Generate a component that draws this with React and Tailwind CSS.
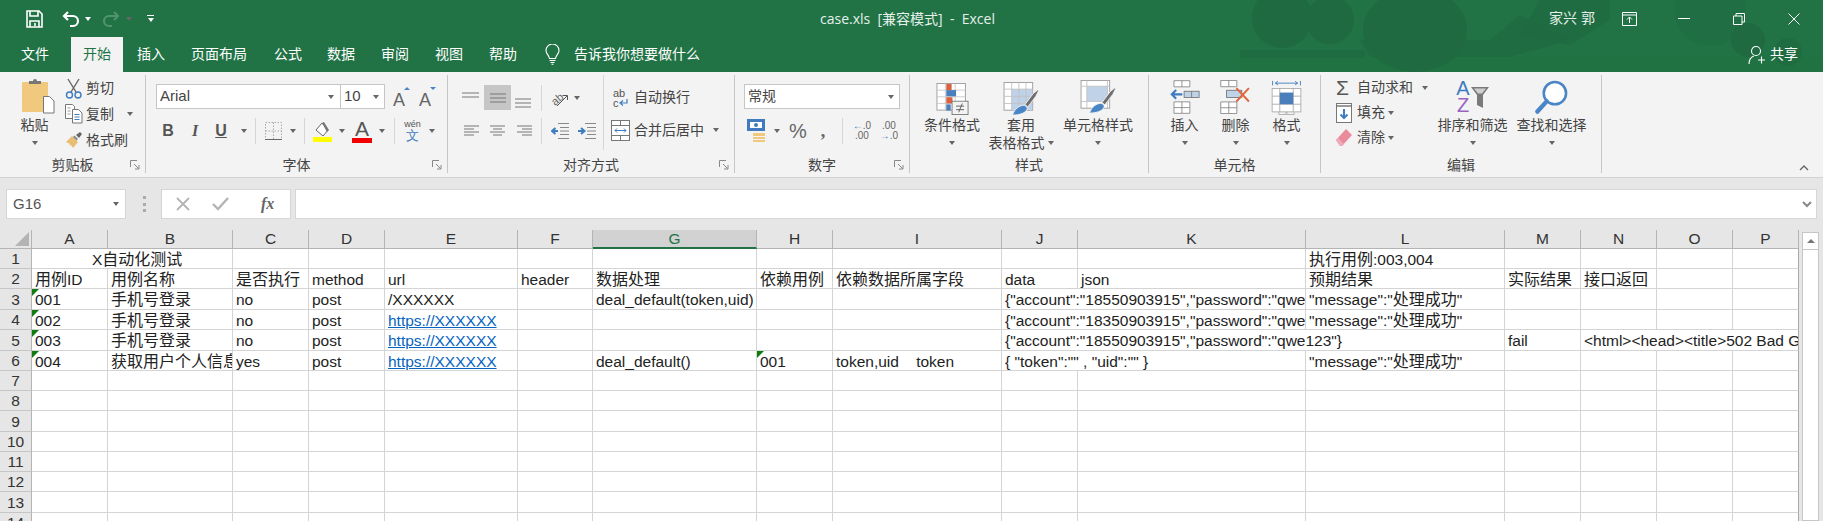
import React from 'react';

const CJK = /([\u4e00-\u9fff]+)/;

// Excel draws the CJK runs slightly larger than the Arial runs
function Mixed({ text }) {
  return text.split(CJK).map((part, i) =>
    i % 2 ? <span key={i} className="text-[16px]">{part}</span> : part
  );
}

function Caret({ className = '' }) {
  return <span className={`inline-block w-0 h-0 shrink-0 border-x-[3.5px] border-t-[4px] border-x-transparent border-t-[#666] ${className}`} />;
}

function VSep({ className = '' }) {
  return <span className={`w-px h-[26px] shrink-0 bg-[#d6d6d6] ${className}`} />;
}

/* ---------- title bar icons ---------- */
const SaveIcon = () => (
  <svg width="17" height="18" viewBox="0 0 17 18" fill="none" stroke="#fff" strokeWidth="1.6">
    <path d="M1 1h12l3 3v13H1z" />
    <path d="M4 1v5h8V1M4 17v-6h9v6" />
    <path d="M9 13v3" />
  </svg>
);
const UndoIcon = ({ color }) => (
  <svg width="18" height="18" viewBox="0 0 18 18" fill="none" stroke={color} strokeWidth="2.2">
    <path d="M6 2L2 6l4 4" />
    <path d="M2.5 6H11a4.5 4.5 0 010 10H8" />
  </svg>
);
const RedoIcon = ({ color }) => (
  <svg width="18" height="18" viewBox="0 0 18 18" fill="none" stroke={color} strokeWidth="2.2">
    <path d="M12 2l4 4-4 4" />
    <path d="M15.5 6H7a4.5 4.5 0 000 10h3" />
  </svg>
);
const Bulb = () => (
  <svg width="15" height="21" viewBox="0 0 15 21" fill="none" stroke="#fff" strokeWidth="1.1">
    <path d="M4.5 14.5C4 11 1 10 1 6.5a6.5 6.5 0 0113 0c0 3.500-3 4.500-3.500 8z" />
    <path d="M4.500 16.500h6M5.500 18.500h4M6.500 20.200h2" />
  </svg>
);

/* ---------- clipboard ---------- */
const PasteIcon = () => (
  <svg width="33" height="36" viewBox="0 0 33 36">
    <rect x="0" y="4" width="26" height="30" rx="1" fill="#f0c97f" />
    <path d="M7 5V3h4a2 2 0 014 0h4v3H7z" fill="#777" />
    <path d="M21.500 18.500h6l4.500 4.500v12h-10.500z" fill="#fff" stroke="#777" />
  </svg>
);
const CutIcon = () => (
  <svg width="18" height="21" viewBox="0 0 18 21" fill="none">
    <path d="M3 1l8 13M14 1L6 14" stroke="#666" strokeWidth="1.4" />
    <circle cx="4.500" cy="17" r="3" stroke="#3f7cbf" strokeWidth="1.4" />
    <circle cx="13" cy="17" r="3" stroke="#3f7cbf" strokeWidth="1.4" />
  </svg>
);
const CopyIcon = () => (
  <svg width="18" height="20" viewBox="0 0 18 20" fill="#fff" stroke="#777">
    <path d="M.5.500h7l2 2v12h-9z" />
    <path d="M7.500 5.500h6l3.500 3.500v10H7.500z" />
    <path d="M9.500 10.500h5M9.500 13h5M9.500 15.500h5" stroke="#3f7cbf" />
    <path d="M2.500 4h3M2.500 7h3M2.500 10h3" stroke="#999" />
  </svg>
);
const BrushIcon = () => (
  <svg width="18" height="18" viewBox="0 0 18 18">
    <path d="M1 11l6-6 6 6-5 6-2-3-2 1 1-2z" fill="#e9bd73" />
    <path d="M8 6l1.500-1.500 3.500 3.500L11.500 9.500z" fill="#888" />
    <path d="M11 4l4-3 2 2-3 4z" fill="#666" />
  </svg>
);

/* ---------- font ---------- */
const FontBigger = ({ up }) => (
  <svg width="18" height="22" viewBox="0 0 18 22">
    <text x="0" y="20" fontFamily="Liberation Sans" fontSize="18" fill="#666">A</text>
    <path d={up ? 'M11 4l3-3 3 3z' : 'M11 1l3 3 3-3z'} fill="#4a86c5" />
  </svg>
);
const BorderIcon = () => (
  <svg width="17" height="18" viewBox="0 0 17 18" fill="none" stroke="#aaa" strokeDasharray="1.500 1.500">
    <path d="M.5.500h16v17H.500zM8.500.500v17M.500 9h16" />
    <path d="M0 17.500h17" stroke="#666" strokeDasharray="none" />
  </svg>
);
const FillIcon = () => (
  <svg width="20" height="21" viewBox="0 0 20 21">
    <path d="M3 9l6-7 6 7-5 6z" fill="#fff" stroke="#666" />
    <path d="M9 2l2-1 5 8-2 2z" fill="#777" />
    <rect x="0" y="16" width="19" height="5" fill="#ffff00" />
  </svg>
);
const FontColor = () => (
  <span className="flex flex-col items-center w-[20px]">
    <span className="text-[21px] leading-[19px] text-[#555] font-['Liberation_Sans']">A</span>
    <span className="w-[20px] h-[5px] bg-[#f00000]" />
  </span>
);
const Wen = () => (
  <span className="flex flex-col items-center w-[17px] text-[#555]">
    <span className="text-[9px] leading-[9px] font-['Liberation_Sans']">wén</span>
    <span className="text-[13px] leading-[13px] text-[#3f7cbf]">文</span>
  </span>
);

/* ---------- alignment ---------- */
const Lines = ({ rows, color = '#777', w = 20, h = 14 }) => (
  <svg width={w} height={h} viewBox={`0 0 ${w} ${h}`} stroke={color} strokeWidth="1">
    {rows.map(([a, b, y], i) => <line key={i} x1={a} x2={b} y1={y} y2={y} />)}
  </svg>
);
const OrientIcon = () => (
  <svg width="18" height="18" viewBox="0 0 18 18" fill="none" stroke="#666">
    <text x="0" y="14" fontFamily="Liberation Sans" fontSize="11" transform="rotate(-40 6 10)" fill="#666" stroke="none">ab</text>
    <path d="M6 17L16 7M11.500 6.500H16.500V11" stroke="#555" />
  </svg>
);
const Indent = ({ flip }) => (
  <svg width="18" height="16" viewBox="0 0 18 16">
    <path d="M7 .500h11M9 4.500h9M9 8h9M9 11.500h9M7 15.500h11" stroke="#888" />
    <path d={flip ? 'M0 8h5M3 5l3.500 3L3 11' : 'M7 8H2M4.500 5L1 8l3.500 3'} stroke="#3f7cbf" strokeWidth="2" fill="none" />
  </svg>
);
const WrapIcon = () => (
  <span className="relative w-[16px] h-[20px] text-[11px] leading-[10px] text-[#555] font-['Liberation_Sans'] flex flex-col">
    <span>ab</span>
    <span className="flex items-center">c
      <svg width="9" height="8" viewBox="0 0 9 8" fill="none" stroke="#3f7cbf" strokeWidth="1.200"><path d="M8 0v4H2M4 1.500L1 4l3 2.500" /></svg>
    </span>
  </span>
);
const MergeIcon = () => (
  <svg width="19" height="21" viewBox="0 0 19 21" fill="#fff" stroke="#777">
    <rect x=".5" y=".5" width="18" height="20" />
    <path d="M.5 5.500h18M.500 15.500h18M9.500.500v5M9.500 15.500v5" />
    <path d="M4 10.500h11M6 8.500l-2 2 2 2M13 8.500l2 2-2 2" stroke="#3f7cbf" fill="none" />
  </svg>
);

/* ---------- number ---------- */
const CurrencyIcon = () => (
  <svg width="20" height="24" viewBox="0 0 20 24">
    <rect x="0" y="0" width="18" height="12" fill="#3f7cbf" />
    <rect x="3" y="3" width="12" height="6" fill="#fff" />
    <circle cx="9" cy="6" r="2" fill="#3f7cbf" />
    <path d="M6 14h12v3H6zM6 18h12v2H6zM6 21h12v2H6z" fill="#f0c97f" />
  </svg>
);
const DecimalIcon = ({ more }) => (
  <span className="flex flex-col w-[16px] text-[10px] leading-[10px] text-[#666] font-['Liberation_Sans'] text-right">
    <span className="whitespace-nowrap">{more ? <><b className="text-[#3f7cbf]">←</b>.0</> : '.00'}</span>
    <span className="whitespace-nowrap">{more ? '.00' : <><b className="text-[#3f7cbf]">→</b>.0</>}</span>
  </span>
);

/* ---------- styles ---------- */
const CondIcon = () => (
  <svg className="mt-[3px]" width="35" height="32" viewBox="0 0 36 36">
    <rect x=".5" y=".5" width="32" height="30" fill="#fff" stroke="#999" />
    <path d="M10 .5v30M21 .5v30M.5 8h32M.5 15.500h32M.5 23h32" stroke="#c8c8c8" />
    <rect x="11" y="1" width="6" height="7" fill="#d8633e" />
    <rect x="11" y="8" width="11" height="7" fill="#4a7fbc" />
    <rect x="11" y="16" width="7" height="7" fill="#d8633e" />
    <rect x="11" y="24" width="5" height="7" fill="#4a7fbc" />
    <rect x="17.500" y="20.500" width="18" height="15" fill="#f3f3f3" stroke="#777" />
    <path d="M22 26h9M22 30h9M29 23l-4 10" stroke="#555" fill="none" />
  </svg>
);
const SwatchBrush = ({ variant }) => (
  <svg className={variant === 'table' ? 'mt-[2px]' : ''} width="37" height="34" viewBox="0 0 40 38">
    <rect x=".5" y=".5" width="32" height="31" fill="#fff" stroke="#999" />
    {variant === 'table' ? (
      <>
        <rect x="9" y="8" width="23" height="23" fill="#bfd2e8" />
        <path d="M9 .5v31M17 .5v31M25 .5v31M.5 8h32M.5 16h32M.5 24h32" stroke="#c2c2c2" />
      </>
    ) : (
      <>
        <rect x="7" y="7" width="23" height="17" fill="#bfd2e8" />
        <path d="M7 .5v31M30 .5v31M.5 7h32M.5 24h32" stroke="#c2c2c2" />
      </>
    )}
    <path d="M24 25l9-12 5-4 1 1-3 6-9 12z" fill="#6f6f6f" stroke="#f3f3f3" />
    <path d="M10 37c2-7 8-11 13-11 3 1 4 3 3 5-2 4-9 6-16 6z" fill="#4a86c5" stroke="#f3f3f3" />
  </svg>
);

/* ---------- cells ---------- */
const InsertCell = () => (
  <svg width="30" height="34" viewBox="0 0 34 38" fill="#fff" stroke="#888">
    <path d="M4.500.500h18v7h-18zM13.500.500v7M4.500 24.500h18v13h-18zM13.500 24.500v13M4.500 31h18" />
    <rect x="16" y="12.500" width="17" height="7" fill="#bfd2e8" stroke="#777" />
    <path d="M24.500 12.500v7" stroke="#777" />
    <path d="M14 16H2M7 11l-5 5 5 5" stroke="#3f7cbf" strokeWidth="2.400" fill="none" />
  </svg>
);
const DeleteCell = () => (
  <svg width="33" height="34" viewBox="0 0 34 38" fill="#fff" stroke="#888">
    <path d="M.5.500h18v7H.500zM9.500.500v7M.500 24.500h18v13H.500zM9.500 24.500v13M.500 31h18" />
    <rect x="7" y="11.500" width="17" height="8" fill="#bfd2e8" stroke="#777" />
    <path d="M18 9l14 15M32 9L18 24" stroke="#e0663f" strokeWidth="2.200" fill="none" />
  </svg>
);
const FormatCell = () => (
  <svg width="33" height="35" viewBox="0 0 33 39" fill="none" stroke="#aaa">
    <path d="M1 1v5M32 1v5" stroke="#3f7cbf" />
    <path d="M4 3.500h25M7 1.500l-3 2 3 2M26 1.500l3 2-3 2" stroke="#3f7cbf" />
    <rect x=".5" y="9.500" width="32" height="26" fill="#fff" />
    <path d="M9 9.500v26M24 9.500v26M.5 18h32M.5 27h32" />
    <rect x="9" y="14" width="15" height="13" fill="#4a7fbc" stroke="none" />
    <path d="M8 35.500v3h8v-3M17 35.500v3h8v-3" />
  </svg>
);

/* ---------- editing ---------- */
const FillDown = () => (
  <svg width="16" height="20" viewBox="0 0 16 20" fill="#fff" stroke="#777">
    <rect x=".5" y=".5" width="15" height="19" />
    <path d="M.5 3h15" strokeWidth="1.500" />
    <path d="M8 6v9M4.500 11.500L8 15l3.500-3.500" stroke="#3f7cbf" strokeWidth="2" fill="none" />
  </svg>
);
const Eraser = () => (
  <svg width="16" height="17" viewBox="0 0 16 17">
    <path d="M0 11L10 0l6 6L6 17H4z" fill="#ea8a9c" />
    <path d="M0 11l2-2 6 6-2 2H4z" fill="#f0a9b6" />
  </svg>
);
const SortIcon = () => (
  <span className="flex items-start h-[36px] font-['Liberation_Sans'] text-[20px] leading-[17px]">
    <span className="flex flex-col items-center">
      <span className="text-[#3f7cbf]">A</span>
      <span className="text-[#9a63c2]">Z</span>
    </span>
    <svg className="mt-[7px] ml-[1px]" width="18" height="21" viewBox="0 0 18 21">
      <path d="M0 0h18l-6 8v13l-6-3V8z" fill="#7a7a7a" />
      <path d="M3 1.500h12l-4 5H7z" fill="#cfcfcf" />
    </svg>
  </span>
);
const SearchIcon = () => (
  <svg width="33" height="35" viewBox="0 0 34 36" fill="none">
    <circle cx="20.500" cy="13.500" r="11.500" fill="#fff" stroke="#4a86c5" strokeWidth="2.600" />
    <path d="M12 22L2.500 32.500" stroke="#4a86c5" strokeWidth="4.500" strokeLinecap="round" />
  </svg>
);

const Launcher = () => (
  <svg className="absolute right-[5px] top-[3px]" width="10" height="10" viewBox="0 0 10 10" fill="none" stroke="#888">
    <path d="M.5 7V.5H7M4 4l4.500 4.500M5 9h4V5" />
  </svg>
);

/* ---------- ribbon pieces ---------- */
function Group({ width, label, launcher, children }) {
  return (
    <div className={`${width} shrink-0 flex flex-col mt-[3px] h-[98px] border-r border-[#c6c6c6]`}>
      <div className="h-[82px] flex">{children}</div>
      <div className="relative h-[16px] leading-[16px] text-center text-[14px] text-[#444]">
        {label}
        {launcher && <Launcher />}
      </div>
    </div>
  );
}

function BigBtn({ width, icon, lines, noCaret }) {
  return (
    <div className={`${width} shrink-0 flex flex-col items-center pt-[5px]`}>
      <div className="h-[36px] flex items-start justify-center">{icon}</div>
      {lines.map((line, i) => (
        <div key={i} className="h-[18px] leading-[18px] text-[14px] text-[#444] whitespace-nowrap flex items-center gap-[3px]">
          {line}
          {i === 1 && <Caret />}
        </div>
      ))}
      {lines.length === 1 && !noCaret && <div className="h-[18px] flex items-center"><Caret /></div>}
    </div>
  );
}

function SmallBtn({ icon, label, caret, height = 'h-[26px]' }) {
  return (
    <div className={`${height} flex items-center text-[14px] text-[#444] whitespace-nowrap`}>
      <span className="w-[21px] shrink-0 flex justify-start">{icon}</span>
      {label}
      {caret}
    </div>
  );
}

function Ribbon() {
  return (
    <div className="h-[106px] flex bg-[#f3f3f3] border-b border-[#d2d2d2]">
      <Group width="w-[146px]" label="剪贴板" launcher>
        <div className="ml-[14px] w-[41px] flex flex-col items-center pt-[3px] text-[14px] text-[#444]">
          <span className="ml-[8px] h-[36px]"><PasteIcon /></span>
          <span className="leading-[20px] mt-[1px] whitespace-nowrap">粘贴</span>
          <Caret className="mt-[6px]" />
        </div>
        <div className="ml-[10px] flex flex-col">
          <SmallBtn icon={<CutIcon />} label="剪切" />
          <SmallBtn icon={<CopyIcon />} label="复制" caret={<Caret className="ml-[13px]" />} />
          <SmallBtn icon={<BrushIcon />} label="格式刷" />
        </div>
      </Group>

      <Group width="w-[302px]" label="字体" launcher>
        <div className="flex flex-col pl-[10px] pt-[9px]">
          <div className="flex items-center">
            <div className="w-[185px] h-[25px] bg-white border border-[#c6c6c6] flex items-center justify-between pl-[3px] pr-[6px] text-[15px] text-[#444] font-['Liberation_Sans']">
              Arial<Caret />
            </div>
            <div className="w-[44px] h-[25px] bg-white border border-l-0 border-[#c6c6c6] flex items-center justify-between pl-[3px] pr-[5px] text-[15px] text-[#444] font-['Liberation_Sans']">
              10<Caret />
            </div>
            <span className="ml-[8px]"><FontBigger up /></span>
            <span className="ml-[8px]"><FontBigger /></span>
          </div>
          <div className="mt-[9px] h-[26px] flex items-center text-[#555] font-['Liberation_Serif'] text-[16px]">
            <b className="w-[24px] text-center font-['Liberation_Sans']">B</b>
            <i className="w-[30px] text-center font-bold">I</i>
            <u className="w-[22px] text-center font-bold font-['Liberation_Sans']">U</u>
            <Caret className="ml-[9px]" />
            <VSep className="ml-[8px]" />
            <span className="ml-[9px]"><BorderIcon /></span>
            <Caret className="ml-[8px]" />
            <VSep className="ml-[8px]" />
            <span className="ml-[8px]"><FillIcon /></span>
            <Caret className="ml-[6px]" />
            <span className="ml-[7px]"><FontColor /></span>
            <Caret className="ml-[7px]" />
            <VSep className="ml-[9px]" />
            <span className="ml-[9px]"><Wen /></span>
            <Caret className="ml-[8px]" />
          </div>
        </div>
      </Group>

      <Group width="w-[287px]" label="对齐方式" launcher>
        <div className="w-[155px] flex flex-col pl-[13px] pt-[10px]">
          <div className="h-[25px] flex items-center">
            <span className="w-[23px] self-start pt-[7px]"><Lines rows={[[1, 18, 1], [1, 18, 5]]} h={6} /></span>
            <span className="w-[27px] h-[25px] bg-[#c6c6c6] flex items-center justify-center"><Lines rows={[[2, 18, 1], [2, 18, 5], [2, 18, 9]]} h={10} /></span>
            <span className="w-[23px] self-end pl-[4px] pb-[2px]"><Lines rows={[[0, 16, 1], [0, 16, 5], [0, 16, 9]]} h={10} /></span>
            <VSep className="ml-[7px]" />
            <span className="ml-[9px]"><OrientIcon /></span>
            <Caret className="ml-[5px]" />
          </div>
          <div className="mt-[9px] h-[24px] flex items-center">
            <span className="w-[26px] pl-[3px]"><Lines rows={[[0, 15, 2], [0, 10, 5], [0, 15, 8], [0, 10, 11]]} /></span>
            <span className="w-[27px] pl-[3px]"><Lines rows={[[0, 15, 2], [3, 12, 5], [0, 15, 8], [3, 12, 11]]} /></span>
            <span className="w-[20px] pl-[3px]"><Lines rows={[[0, 15, 2], [5, 15, 5], [0, 15, 8], [5, 15, 11]]} /></span>
            <VSep className="ml-[7px]" />
            <span className="ml-[9px]"><Indent /></span>
            <span className="ml-[9px]"><Indent flip /></span>
          </div>
        </div>
        <div className="h-[75px] border-l border-[#d6d6d6] pl-[7px] flex flex-col text-[14px] text-[#444] whitespace-nowrap">
          <div className="h-[44px] flex items-center pl-[2px] pt-[1px]"><WrapIcon /><span className="ml-[5px]">自动换行</span></div>
          <div className="h-[22px] flex items-center"><MergeIcon /><span className="ml-[4px]">合并后居中</span><Caret className="ml-[9px]" /></div>
        </div>
      </Group>

      <Group width="w-[175px]" label="数字" launcher>
        <div className="flex flex-col pl-[9px] pt-[9px]">
          <div className="w-[156px] h-[25px] bg-white border border-[#c6c6c6] flex items-center justify-between pl-[3px] pr-[5px] text-[14px] text-[#444]">
            常规<Caret />
          </div>
          <div className="mt-[9px] h-[26px] flex items-center text-[#666]">
            <span className="ml-[3px]"><CurrencyIcon /></span>
            <Caret className="ml-[7px]" />
            <span className="ml-[9px] text-[20px] font-['Liberation_Sans']">%</span>
            <span className="ml-[14px] w-[8px] text-[18px] font-bold font-['Liberation_Serif'] leading-none">,</span>
            <VSep className="ml-[13px]" />
            <span className="ml-[10px]"><DecimalIcon more /></span>
            <span className="ml-[11px]"><DecimalIcon /></span>
          </div>
        </div>
      </Group>

      <Group width="w-[239px]" label="样式">
        <BigBtn width="w-[84px]" icon={<CondIcon />} lines={['条件格式']} />
        <BigBtn width="w-[54px]" icon={<SwatchBrush variant="table" />} lines={['套用', '表格格式']} />
        <BigBtn width="w-[100px]" icon={<SwatchBrush variant="cell" />} lines={['单元格样式']} />
      </Group>

      <Group width="w-[172px]" label="单元格">
        <div className="w-[10px] shrink-0" />
        <BigBtn width="w-[51px]" icon={<InsertCell />} lines={['插入']} />
        <BigBtn width="w-[51px]" icon={<DeleteCell />} lines={['删除']} />
        <BigBtn width="w-[51px]" icon={<FormatCell />} lines={['格式']} />
      </Group>

      <Group width="w-[281px]" label="编辑">
        <div className="ml-[15px] w-[97px] shrink-0 flex flex-col">
          <SmallBtn height="h-[25px]" icon={<span className="text-[21px] leading-none text-[#555] font-['Liberation_Sans']">Σ</span>} label="自动求和" caret={<Caret className="ml-[9px]" />} />
          <SmallBtn height="h-[25px]" icon={<FillDown />} label="填充" caret={<Caret className="ml-[3px]" />} />
          <SmallBtn height="h-[25px]" icon={<Eraser />} label="清除" caret={<Caret className="ml-[3px]" />} />
        </div>
        <BigBtn width="w-[79px]" icon={<SortIcon />} lines={['排序和筛选']} />
        <BigBtn width="w-[79px]" icon={<SearchIcon />} lines={['查找和选择']} />
      </Group>

      <div className="flex-1 flex justify-end items-end pr-[14px] pb-[6px]">
        <svg width="10" height="6" viewBox="0 0 10 6" fill="none" stroke="#666" strokeWidth="1.400"><path d="M1 5l4-4 4 4" /></svg>
      </div>
    </div>
  );
}

/* ---------- header ---------- */
const TABS = [
  ['插入', 'ml-[14px]'],
  ['页面布局', 'ml-[26px]'],
  ['公式', 'ml-[27px]'],
  ['数据', 'ml-[25px]'],
  ['审阅', 'ml-[26px]'],
  ['视图', 'ml-[26px]'],
  ['帮助', 'ml-[26px]'],
];

function Header() {
  return (
    <div className="relative h-[72px] bg-[#217346] text-white overflow-hidden">
      {/* the dark office-theme shapes behind the right side of the title bar */}
      <svg className="absolute left-[1240px] top-0" width="583" height="72" viewBox="0 0 583 72" fill="#1f6a41">
        <rect x="0" y="57" width="583" height="15" fill="#20713f" opacity="0.5" />
        <circle cx="42" cy="18" r="30" />
        <circle cx="90" cy="20" r="24" />
        <path d="M0 50h125v8H0z" opacity="0.7" />
        <ellipse cx="175" cy="30" rx="52" ry="42" />
        <path d="M120 40h130l30-25 50 25-60 17H130z" opacity="0.8" />
        <path d="M300 0h70v20l-40 25-50-10z" opacity="0.7" />
        <circle cx="470" cy="10" r="36" opacity="0.5" />
        <circle cx="508" cy="40" r="17" />
        <circle cx="548" cy="52" r="14" opacity="0.8" />
      </svg>

      <div className="relative h-[37px] flex items-center">
        <span className="ml-[26px]"><SaveIcon /></span>
        <span className="ml-[19px]"><UndoIcon color="#fff" /></span>
        <Caret className="ml-[5px] border-t-white" />
        <span className="ml-[11px]"><RedoIcon color="#4f9370" /></span>
        <Caret className="ml-[6px] border-t-[#4f9370]" />
        <span className="ml-[15px] flex flex-col items-center gap-[2px]">
          <span className="w-[7px] h-px bg-white" />
          <Caret className="border-t-white" />
        </span>
        <span className="absolute left-[820px] text-[14px] text-[#e6f0ea] font-['Open_Sans','Noto_Sans_CJK_SC',sans-serif] whitespace-pre">case.xls  [兼容模式]  -  Excel</span>
        <div className="ml-auto flex items-center text-[#e6f0ea]">
          <span className="text-[14px] whitespace-pre">家兴 郭</span>
          <svg className="ml-[27px]" width="15" height="14" viewBox="0 0 15 14" fill="none" stroke="#fff"><path d="M.5.5h14v13H.5zM.5 3h14M7.500 11V5M5 7.500l2.500-2.500L10 7.500" /></svg>
          <span className="ml-[41px] w-[12px] h-px bg-white" />
          <svg className="ml-[43px]" width="12" height="12" viewBox="0 0 12 12" fill="none" stroke="#fff"><path d="M.5 3h8.500v8.500H.5zM3 3V.5h8.500V9H9" /></svg>
          <svg className="ml-[43px] mr-[23px]" width="12" height="12" viewBox="0 0 12 12" fill="none" stroke="#fff"><path d="M.5.5l11 11M11.500.5l-11 11" /></svg>
        </div>
      </div>

      <div className="relative h-[35px] flex items-center text-[14px] whitespace-nowrap">
        <span className="ml-[21px]">文件</span>
        <span className="ml-[22px] w-[52px] h-[35px] bg-[#f3f3f3] text-[#217346] flex items-center justify-center">开始</span>
        {TABS.map(([label, ml]) => <span key={label} className={ml}>{label}</span>)}
        <span className="ml-[28px]"><Bulb /></span>
        <span className="ml-[14px]">告诉我你想要做什么</span>
        <div className="ml-auto mr-[25px] flex items-center">
          <svg width="18" height="20" viewBox="0 0 18 20" fill="none" stroke="#fff" strokeWidth="1.100">
            <circle cx="8" cy="6" r="4.500" />
            <path d="M1 19c0-4 2-7 5-8M10 15h7M13.500 11.500v7" />
          </svg>
          <span className="ml-[4px]">共享</span>
        </div>
      </div>
    </div>
  );
}

function FormulaBar() {
  return (
    <div className="h-[52px] flex items-start pt-[11px] bg-[#e6e6e6]">
      <div className="ml-[6px] w-[120px] h-[30px] bg-white border border-[#d6d6d6] flex items-center justify-between pl-[6px] pr-[6px] text-[15px] text-[#555] font-['Liberation_Sans']">
        G16<Caret />
      </div>
      <div className="ml-[17px] w-[3px] h-[16px] mt-[7px] flex flex-col justify-between">
        <span className="h-[3px] bg-[#aaa]" /><span className="h-[3px] bg-[#aaa]" /><span className="h-[3px] bg-[#aaa]" />
      </div>
      <div className="ml-[15px] w-[130px] h-[30px] bg-white border border-[#d6d6d6] flex items-center text-[#aaa]">
        <svg className="ml-[14px]" width="14" height="14" viewBox="0 0 14 14" fill="none" stroke="#b4b4b4" strokeWidth="1.800"><path d="M1 1l12 12M13 1L1 13" /></svg>
        <svg className="ml-[22px]" width="17" height="14" viewBox="0 0 17 14" fill="none" stroke="#b4b4b4" strokeWidth="2.400"><path d="M1 7l5 5L16 1" /></svg>
        <i className="ml-[32px] text-[16px] font-bold text-[#666] font-['Liberation_Serif']">fx</i>
      </div>
      <div className="ml-[4px] w-[1522px] h-[30px] bg-white border border-[#d6d6d6] flex items-center justify-end pr-[4px]">
        <svg width="10" height="7" viewBox="0 0 10 7" fill="none" stroke="#888" strokeWidth="2"><path d="M1 1l4 4 4-4" /></svg>
      </div>
    </div>
  );
}

/* ---------- sheet ---------- */
const COLS = ['A', 'B', 'C', 'D', 'E', 'F', 'G', 'H', 'I', 'J', 'K', 'L', 'M', 'N', 'O', 'P'];
const ROW_CLASSES = 'grid-cols-[32px_76px_125px_76px_76px_133px_75px_164px_76px_169px_76px_228px_199px_76px_76px_76px_66px] grid-rows-[19px_20px_20px_21px_20px_21px_20px_20px_20px_21px_20px_20px_20px_21px_20px]';
const SPANS = { 1: '', 2: 'col-span-2', 3: 'col-span-3' };

const LOGIN = '手机号登录';
const URL_TEXT = 'https://XXXXXX';
const OK_MSG = '"message":"处理成功"';
const acct = (n) => `{"account":"${n}","password":"qwe123"}`;

const ROWS = [
  { A: { t: 'X自动化测试', span: 2, pad: 'pl-[60px]' }, L: { t: '执行用例:003,004' } },
  { A: { t: '用例ID' }, B: { t: '用例名称' }, C: { t: '是否执行' }, D: { t: 'method' }, E: { t: 'url' }, F: { t: 'header' }, G: { t: '数据处理' }, H: { t: '依赖用例' }, I: { t: '依赖数据所属字段' }, J: { t: 'data' }, K: { t: 'json' }, L: { t: '预期结果' }, M: { t: '实际结果' }, N: { t: '接口返回' } },
  { A: { t: '001', tri: true }, B: { t: LOGIN }, C: { t: 'no' }, D: { t: 'post' }, E: { t: '/XXXXXX' }, G: { t: 'deal_default(token,uid)' }, J: { t: acct('18550903915'), span: 2 }, L: { t: OK_MSG } },
  { A: { t: '002', tri: true }, B: { t: LOGIN }, C: { t: 'no' }, D: { t: 'post' }, E: { t: URL_TEXT, link: true }, J: { t: acct('18350903915'), span: 2 }, L: { t: OK_MSG } },
  { A: { t: '003', tri: true }, B: { t: LOGIN }, C: { t: 'no' }, D: { t: 'post' }, E: { t: URL_TEXT, link: true }, J: { t: acct('18550903915'), span: 3 }, M: { t: 'fail' }, N: { t: '<html><head><title>502 Bad Gateway</title>', span: 3 } },
  { A: { t: '004', tri: true }, B: { t: '获取用户个人信息' }, C: { t: 'yes' }, D: { t: 'post' }, E: { t: URL_TEXT, link: true }, G: { t: 'deal_default()' }, H: { t: '001', tri: true }, I: { t: 'token,uid    token' }, J: { t: '{ "token":"" , "uid":"" }', span: 2 }, L: { t: OK_MSG } },
  {}, {}, {}, {}, {}, {}, {}, {}, {},
];

function Cell({ cell, last }) {
  const cls = `relative overflow-hidden whitespace-pre border-b border-[#d4d4d4] pt-[1px] leading-[19px] text-[15.5px] text-[#222] ${last ? 'border-r border-r-[#a8a8a8]' : 'border-r'} ${cell?.span ? SPANS[cell.span] : ''} ${cell?.pad || 'pl-[3px]'}`;
  return (
    <div className={cls}>
      {cell?.tri && <span className="absolute left-0 top-0 w-0 h-0 border-t-[7px] border-r-[7px] border-t-[#107c10] border-r-transparent" />}
      {cell?.link
        ? <span className="text-[#0563c1] underline">{cell.t}</span>
        : cell && <Mixed text={cell.t} />}
    </div>
  );
}

function Sheet() {
  return (
    <div className="h-[291px] flex bg-[#e6e6e6] overflow-hidden">
      <div className={`w-[1799px] shrink-0 grid ${ROW_CLASSES} bg-white text-[15.5px]`}>
        <div className="bg-[#e6e6e6] border-r border-b border-[#b4b4b4] flex items-end justify-end pr-[2px] pb-[2px]">
          <span className="w-0 h-0 border-b-[14px] border-l-[14px] border-b-[#b4b4b4] border-l-transparent" />
        </div>
        {COLS.map((c) => (
          <div
            key={c}
            className={`flex items-center justify-center text-[15.5px] border-r border-r-[#b4b4b4] ${c === 'G' ? 'bg-[#d2d2d2] text-[#217346] border-b-2 border-b-[#217346]' : 'bg-[#e6e6e6] text-[#333] border-b border-b-[#b4b4b4]'}`}
          >
            {c}
          </div>
        ))}
        {ROWS.map((row, r) => {
          const cells = [];
          let skip = 0;
          COLS.forEach((c, i) => {
            if (skip > 0) { skip -= 1; return; }
            const cell = row[c];
            if (cell?.span) skip = cell.span - 1;
            cells.push(<Cell key={c} cell={cell} last={i + (cell?.span || 1) === COLS.length} />);
          });
          return (
            <React.Fragment key={r}>
              <div className="bg-[#e6e6e6] border-r border-r-[#b4b4b4] border-b border-b-[#c6c6c6] pt-[1px] flex items-center justify-center text-[#333]">{r + 1}</div>
              {cells}
            </React.Fragment>
          );
        })}
      </div>
      <div className="ml-[3px] mt-[2px] w-[17px] flex flex-col border border-[#c6c6c6] bg-white">
        <div className="h-[17px] border-b border-[#c6c6c6] flex items-center justify-center">
          <span className="w-0 h-0 border-x-[4px] border-b-[4px] border-x-transparent border-b-[#777]" />
        </div>
      </div>
    </div>
  );
}

export default function App() {
  return (
    <div className="w-[1823px] h-[521px] overflow-hidden bg-[#e6e6e6] font-['Liberation_Sans','Noto_Sans_CJK_SC',sans-serif]">
      <Header />
      <Ribbon />
      <FormulaBar />
      <Sheet />
    </div>
  );
}
